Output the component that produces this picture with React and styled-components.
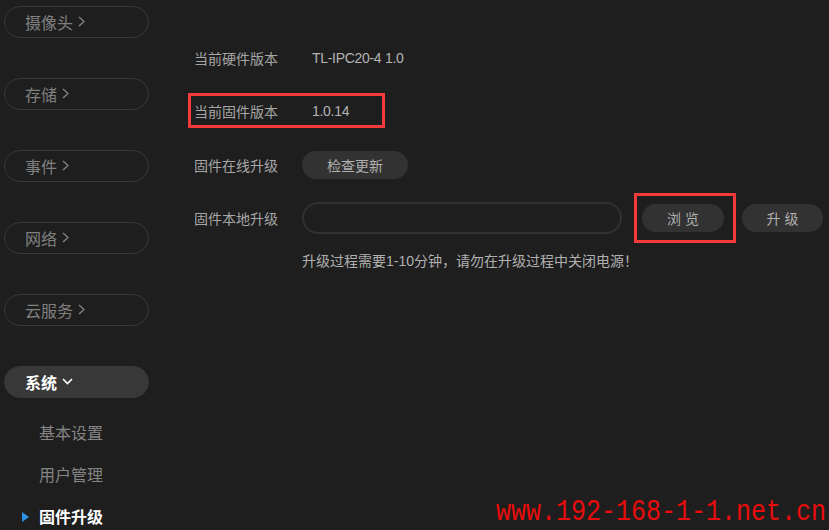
import React from "react";
import styled, { createGlobalStyle } from "styled-components";

const Global = createGlobalStyle`
  html, body { margin: 0; padding: 0; background: #1e1e1e; }
  body { font-family: "Liberation Sans", "Noto Sans CJK SC", sans-serif; }
  * { box-sizing: border-box; }
`;

const Page = styled.div`
  position: relative;
  display: flex;
  width: 829px;
  height: 530px;
  overflow: hidden;
  background: #1e1e1e;
`;

const Sidebar = styled.nav`
  width: 188px;
  flex: none;
  padding: 6px 0 0 4px;
  display: flex;
  flex-direction: column;
`;

const Pills = styled.div`
  display: flex;
  flex-direction: column;
  gap: 40px;
`;

const Pill = styled.div`
  width: 145px;
  height: 32px;
  border-radius: 16px;
  border: 1px solid #383838;
  background: ${(p) => (p.$open ? "#383838" : "transparent")};
  color: ${(p) => (p.$open ? "#ffffff" : "#808080")};
  font-size: 16px;
  display: flex;
  align-items: center;
  padding-left: 20px;
  padding-bottom: 1px;
  gap: 5px;
  font-weight: ${(p) => (p.$open ? 600 : 400)};
`;

const SubMenu = styled.div`
  margin-top: 13px;
  display: flex;
  flex-direction: column;
`;

const SubItem = styled.div`
  height: 42px;
  display: flex;
  align-items: center;
  padding-left: 18px;
  font-size: 16px;
  color: ${(p) => (p.$active ? "#ffffff" : "#858585")};
  font-weight: ${(p) => (p.$active ? 600 : 400)};
`;

const Marker = styled.span`
  width: 7px;
  height: 10px;
  margin-right: 10px;
  flex: none;
  display: inline-block;
  visibility: ${(p) => (p.$show ? "visible" : "hidden")};
  border-left: 7px solid #2e8fe6;
  border-top: 5px solid transparent;
  border-bottom: 5px solid transparent;
  margin-top: 1px;
`;

const Main = styled.main`
  flex: 1;
  padding-top: 40px;
  display: flex;
  flex-direction: column;
  align-items: flex-start;
`;

const Row = styled.div`
  display: flex;
  align-items: center;
  height: ${(p) => p.$h}px;
  margin-top: ${(p) => p.$mt || 0}px;
  padding-left: ${(p) => (p.$boxed ? 3 : 6)}px;
  width: ${(p) => (p.$boxed ? "197px" : "auto")};
  border: ${(p) => (p.$boxed ? "3px solid #f23a3a" : "none")};
`;

const Label = styled.span`
  width: 108px;
  flex: none;
  font-size: 14px;
  color: #a6a6a6;
`;

const Value = styled.span`
  margin-left: 10px;
  font-size: 14px;
  letter-spacing: -0.3px;
  color: #b4b4b4;
`;

const Button = styled.button`
  width: ${(p) => p.$w}px;
  height: 28px;
  border: none;
  border-radius: 14px;
  background: #323232;
  color: #b0b0b0;
  font-family: inherit;
  font-size: 14px;
  letter-spacing: ${(p) => (p.$spaced ? "4px" : "0")};
  text-indent: ${(p) => (p.$spaced ? "4px" : "0")};
  margin-left: ${(p) => p.$ml || 0}px;
  padding: 0;
  cursor: pointer;
`;

const FileInput = styled.div`
  width: 320px;
  height: 32px;
  border: 2px solid #313131;
  border-radius: 16px;
`;

const HighlightBox = styled.div`
  width: 102px;
  height: 50px;
  margin-left: 12px;
  border: 3px solid #f23a3a;
  display: flex;
  align-items: center;
  padding-left: 5px;
`;

const Warning = styled.p`
  margin: 7px 0 0 0;
  padding-left: 114px;
  line-height: 20px;
  font-size: 14px;
  color: #b0b0b0;
`;

const FullWidth = styled.span`
  font-family: "Noto Sans CJK SC", sans-serif;
`;

const Watermark = styled.div`
  position: absolute;
  left: 496px;
  bottom: 2px;
  font-family: "Liberation Mono", "DejaVu Sans Mono", monospace;
  font-size: 25px;
  line-height: 26px;
  color: #e80c0c;
  transform: scaleY(1.15);
  transform-origin: bottom left;
`;

const ChevronRight = () => (
  <svg width="7" height="11" viewBox="0 0 7 11" fill="none">
    <path d="M1 1 L6 5.5 L1 10" stroke="currentColor" strokeWidth="1.4" />
  </svg>
);

const ChevronDown = () => (
  <svg width="11" height="7" viewBox="0 0 11 7" fill="none">
    <path d="M1 1 L5.5 5.5 L10 1" stroke="currentColor" strokeWidth="1.6" />
  </svg>
);

const menu = ["摄像头", "存储", "事件", "网络", "云服务"];
const sub = ["基本设置", "用户管理", "固件升级"];

export default function App() {
  return (
    <>
      <Global />
      <Page>
        <Sidebar>
          <Pills>
            {menu.map((m) => (
              <Pill key={m}>
                {m}
                <ChevronRight />
              </Pill>
            ))}
            <Pill $open>
              系统
              <ChevronDown />
            </Pill>
          </Pills>
          <SubMenu>
            {sub.map((s, i) => (
              <SubItem key={s} $active={i === 2}>
                <Marker $show={i === 2} />
                {s}
              </SubItem>
            ))}
          </SubMenu>
        </Sidebar>
        <Main>
          <Row $h={35}>
            <Label>当前硬件版本</Label>
            <Value>TL-IPC20-4 1.0</Value>
          </Row>
          <Row $h={35} $mt={18} $boxed>
            <Label>当前固件版本</Label>
            <Value>1.0.14</Value>
          </Row>
          <Row $h={34} $mt={20}>
            <Label>固件在线升级</Label>
            <Button $w={106}>检查更新</Button>
          </Row>
          <Row $h={50} $mt={11}>
            <Label>固件本地升级</Label>
            <FileInput />
            <HighlightBox>
              <Button $w={82} $spaced>浏览</Button>
            </HighlightBox>
            <Button $w={81} $ml={6} $spaced>升级</Button>
          </Row>
          <Warning>
            升级过程需要1-10分钟<FullWidth>，</FullWidth>请勿在升级过程中关闭电源<FullWidth>！</FullWidth>
          </Warning>
        </Main>
        <Watermark>www.192-168-1-1.net.cn</Watermark>
      </Page>
    </>
  );
}
